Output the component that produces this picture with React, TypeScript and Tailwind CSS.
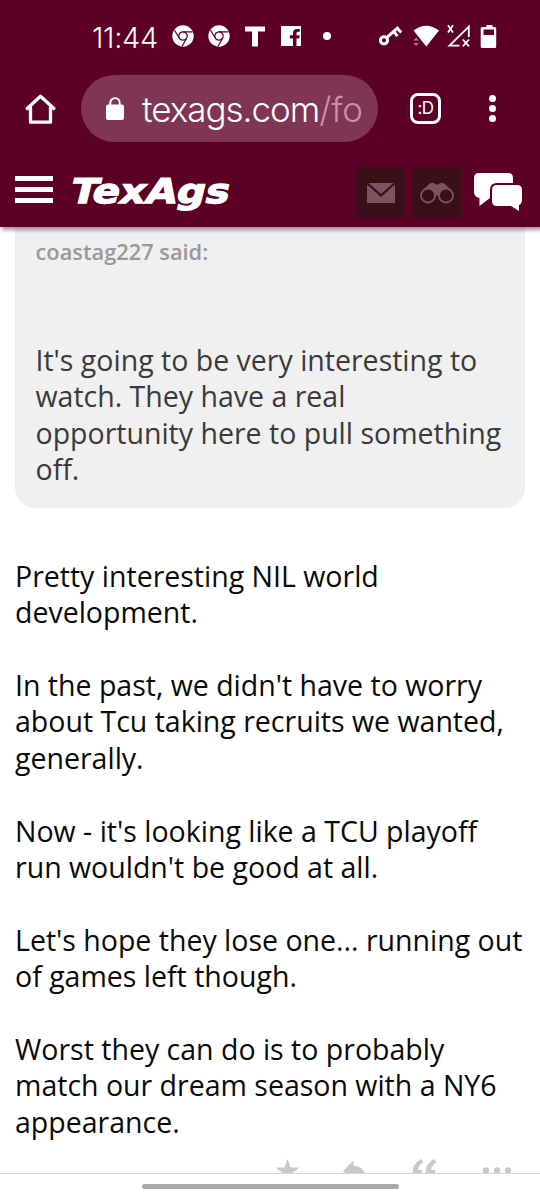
import type { ReactNode } from "react";

const paragraphs = [
  ["Pretty interesting NIL world", "development."],
  ["In the past, we didn't have to worry", "about Tcu taking recruits we wanted,", "generally."],
  ["Now - it's looking like a TCU playoff", "run wouldn't be good at all."],
  ["Let's hope they lose one... running out", "of games left though."],
  ["Worst they can do is to probably", "match our dream season with a NY6", "appearance."],
];

const quote = [
  "It's going to be very interesting to",
  "watch. They have a real",
  "opportunity here to pull something",
  "off.",
];

function Lines({ lines }: { lines: string[] }) {
  return (
    <>
      {lines.map((line) => (
        <span key={line} className="block whitespace-nowrap">
          {line}
        </span>
      ))}
    </>
  );
}

function ChromeIcon() {
  return (
    <svg viewBox="0 0 22 22" className="size-[22px]">
      <circle cx="11" cy="11" r="10.7" fill="#fff" />
      <g fill="none" stroke="#5c0025" strokeWidth="1.2">
        <circle cx="11" cy="11" r="4.2" />
        <path d="M11 6.8h9.5M7.3 13 2.5 5.2M14.6 13.1 10 21.5" />
      </g>
    </svg>
  );
}

function StatusBar() {
  return (
    <div className="flex h-[75px] items-start pl-[92px] pt-[22px] text-white">
      <span className="w-[80px] whitespace-nowrap font-['Inter',sans-serif] text-[29px] font-light leading-[31px] tracking-[-0.3px]">
        11:44
      </span>
      <div className="flex pt-[3px]">
        <ChromeIcon />
        <div className="ml-[14px]">
          <ChromeIcon />
        </div>
        <svg viewBox="0 0 20 22" className="ml-[15px] h-[22px] w-5">
          <path d="M0 1.5h20v5h-7V21.5H7V6.5H0z" fill="#fff" />
        </svg>
        <svg viewBox="0 0 22 22" className="ml-[15px] size-[22px]">
          <path d="M1 1h20v20h-4.5v-7.5h2.7l.5-3.3h-3.2V8.300c0-1 .5-1.500 1.600-1.500h1.700V3.900h-2.600c-2.800 0-4.200 1.500-4.200 4.100v2.200H9.800v3.300H13V21H1z" fill="#fff" />
        </svg>
        <span className="ml-[21px] mt-[7px] size-2 rounded-full bg-white" />
      </div>
      <svg viewBox="0 0 124 30" className="ml-[46px] h-[30px] w-[124px]">
        <g fill="none" stroke="#fff">
          <circle cx="7" cy="18.300" r="3.600" strokeWidth="3" />
          <path d="m10 15.300 11.500-10.200m-5 4.500 4 4.500M20 6l4.200 4.500" strokeWidth="3" />
        </g>
        <path d="M36.500 8.500Q49.200-1 62 8.500L49.300 24.500z" fill="#fff" />
        <g fill="#b58097">
          <path d="m36.500 18.500 2.600-3 2.600 3zM36.500 21h5.200l-2.600 3z" />
        </g>
        <path d="M82.500 23.700H72.500L91.800 4.700V15M71 3.200l5 7.200m0-7.200-5 7.200M85.800 17.500l6.200 6.800m0-6.800-6.200 6.800" fill="none" stroke="#fff" strokeWidth="1.800" />
        <path d="M109.500 3h6v2h2.200q1.500 0 1.500 1.500v18q0 1.500-1.500 1.500h-12.500q-1.500 0-1.500-1.500v-18q0-1.500 1.500-1.500h4.300z" fill="#fff" />
        <path d="M106.500 7.500h10.500v5.500h-10.500z" fill="#5c0025" />
      </svg>
    </div>
  );
}

function AddressBar() {
  return (
    <div className="flex h-[67px] items-center pl-[25px] text-white">
      <svg viewBox="0 0 32 32" className="size-8 shrink-0">
        <path d="M2.200 15.500 15.500 3.200 28.800 15.500M5.500 14.500v14.700h20V14.500" fill="none" stroke="#fff" strokeWidth="3.300" strokeLinecap="round" strokeLinejoin="round" />
      </svg>
      <div className="ml-6 flex h-[67px] w-[297px] shrink-0 items-center overflow-hidden rounded-full bg-[#7f3653] pl-[25px]">
        <svg viewBox="0 0 18 23" className="h-[23px] w-[18px] shrink-0">
          <rect y="7.500" width="18" height="15.500" rx="2" fill="#fff" />
          <path d="M4.300 9V5.800a4.700 4.700 0 0 1 9.400 0V9" fill="none" stroke="#fff" strokeWidth="1.900" />
        </svg>
        <span className="ml-[18px] mt-[2px] whitespace-nowrap font-['Inter',sans-serif] text-[35px] font-light tracking-[-1px]">
          texags.com<span className="tracking-[-0.300px] text-[#c991ac]">/fo</span>
        </span>
      </div>
      <span className="ml-8 flex size-[31px] shrink-0 items-center justify-center rounded-[8px] border-3 border-white font-['Inter',sans-serif] text-[17px] leading-none tracking-[-0.500px]">
        :D
      </span>
      <div className="ml-[48px] flex flex-col gap-[3px]">
        <span className="size-[7px] rounded-full bg-white" />
        <span className="size-[7px] rounded-full bg-white" />
        <span className="size-[7px] rounded-full bg-white" />
      </div>
    </div>
  );
}

function HeaderTile({ children }: { children: ReactNode }) {
  return (
    <div className="flex size-[50px] items-center justify-center rounded-[5px] bg-[#3b0f19]">
      {children}
    </div>
  );
}

function SiteHeader() {
  return (
    <div className="flex h-[85px] items-center pl-[15px] pt-[17px]">
      <div className="mb-[7px] flex w-[38px] flex-col gap-[6px]">
        <span className="h-[5px] bg-white" />
        <span className="h-[5px] bg-white" />
        <span className="h-[5px] bg-white" />
      </div>
      <svg viewBox="0 0 184 60" className="ml-[6px] h-[60px] w-[184px]">
        <g
          transform="translate(9.500 40) skewX(-14)"
          fill="#fff"
          stroke="#fff"
          strokeWidth="1.300"
          fontFamily="DejaVu Sans, sans-serif"
          fontSize="34"
          fontWeight="700"
        >
          <text textLength="159" lengthAdjust="spacingAndGlyphs">TexAgs</text>
        </g>
      </svg>
      <div className="ml-[113px] flex items-center gap-[6px]">
        <HeaderTile>
          <svg viewBox="0 0 28 20" className="h-5 w-7" fill="#7c535f">
            <path d="M1.500 0h25L14 11z" />
            <path d="M0 1.500 14 14 28 1.500V20H0z" />
          </svg>
        </HeaderTile>
        <HeaderTile>
          <svg viewBox="0 0 34 22" className="h-[22px] w-[34px]">
            <path d="M2 9 8 3q4-4 7-1 2 1 4 0 3-3 7 1l6 6-7 1-8 4-8-4z" fill="#7c535f" />
            <g fill="#3b0f19" stroke="#7c535f" strokeWidth="1.800">
              <circle cx="8" cy="13.500" r="7" />
              <circle cx="26" cy="13.500" r="7" />
            </g>
          </svg>
        </HeaderTile>
      </div>
      <svg viewBox="0 0 48 40" className="mb-[2px] ml-[12px] h-10 w-12">
        <path d="M5 1h29q5 0 5 5v5H23q-7 0-7 7v8L5.500 34V26Q0 25 0 20V6Q0 1 5 1z" fill="#fff" />
        <path d="M23 13h20q5 0 5 5v10q0 4-3 5v6l-8-5H23q-5 0-5-5V18q0-5 5-5z" fill="#fff" />
      </svg>
    </div>
  );
}

function PostActions() {
  return (
    <svg viewBox="0 0 540 34" className="h-[34px] w-[540px] shrink-0" fill="#c8c8c8">
      <path d="m287.500 0 3 8.500h9l-7 5.500 2.600 9-7.600-5.300-7.600 5.300 2.600-9-7-5.500h9z" />
      <path d="m343 12 10.500-10.500v5q11 1 14 14-6-5-14-5V22z" />
      <path d="M421.500 0q-9 4-9 14v3h9.500V11h-4q1-6 5.500-7.500zM434.500 0q-9 4-9 14v3h9.500V11h-4q1-6 5.500-7.500z" />
      <circle cx="486" cy="11.500" r="3.200" />
      <circle cx="497" cy="11.500" r="3.200" />
      <circle cx="508" cy="11.500" r="3.200" />
    </svg>
  );
}

export default function App() {
  return (
    <div className="flex h-[1200px] w-[540px] flex-col overflow-hidden bg-white font-['Open_Sans',sans-serif]">
      <header className="z-10 h-[227px] shrink-0 bg-[#5c0025] shadow-[2px_3px_4px_rgba(70,20,40,0.450)]">
        <StatusBar />
        <AddressBar />
        <SiteHeader />
      </header>
      <main className="flex min-h-0 flex-1 flex-col overflow-hidden text-[28.500px] leading-[36.400px]">
        <blockquote className="mx-[15px] h-[280.500px] shrink-0 rounded-b-[20px] bg-[#f0f0f0] pl-[20.500px] pt-[11px] text-[#3a3a3a]">
          <p className="mb-[76px] text-[21.800px] font-semibold leading-7 text-[#999]">coastag227 said:</p>
          <Lines lines={quote} />
        </blockquote>
        <article className="mt-[50.300px] flex shrink-0 flex-col gap-[36.400px] pl-[15px] text-[#0a0a0a]">
          {paragraphs.map((lines) => (
            <p key={lines[0]}>
              <Lines lines={lines} />
            </p>
          ))}
        </article>
        <div className="mt-[19.200px] shrink-0">
          <PostActions />
        </div>
      </main>
      <footer className="flex h-[27px] shrink-0 justify-center border-t border-[#d8d8d8] bg-white pt-[10px]">
        <span className="h-[5px] w-[257px] rounded-full bg-[#a8a8a8]" />
      </footer>
    </div>
  );
}
